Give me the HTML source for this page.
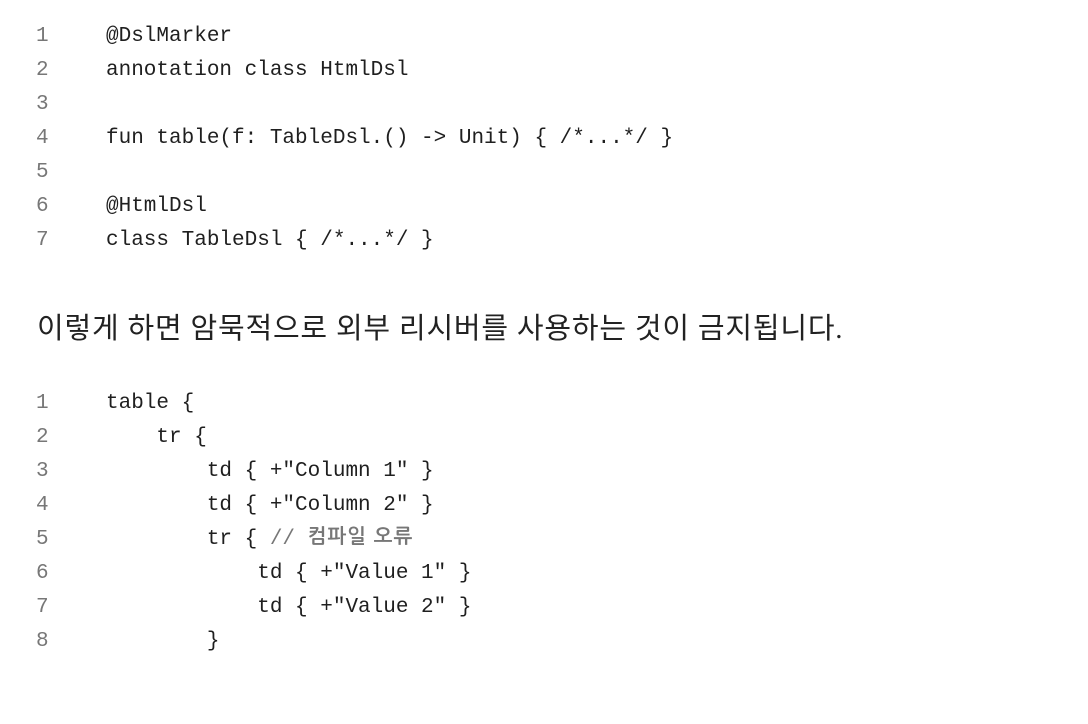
<!DOCTYPE html>
<html><head><meta charset="utf-8"><style>
body{margin:0;background:#fff;width:1088px;height:724px;overflow:hidden;position:relative}
.l{position:absolute;left:0;height:34px;line-height:34px;font-family:"Liberation Mono","NanumGothic",monospace;font-size:21px;color:#1f1f1f;white-space:pre}
.n{position:absolute;left:36px;color:#777}
.c{position:absolute;left:106px}
.cm{color:#777}
.ck{font-family:"NanumGothic","Noto Sans CJK KR",sans-serif;font-size:20px;font-weight:bold;letter-spacing:1px;line-height:20px;vertical-align:1px}
.p{position:absolute;left:37px;top:305px;font-family:"Liberation Serif","Noto Sans CJK KR",serif;font-size:29px;color:#222;white-space:nowrap;letter-spacing:0.8px}
</style></head><body>
<div class="l" style="top:20px"><span class="n">1</span><span class="c">@DslMarker</span></div>
<div class="l" style="top:54px"><span class="n">2</span><span class="c">annotation class HtmlDsl</span></div>
<div class="l" style="top:88px"><span class="n">3</span><span class="c"></span></div>
<div class="l" style="top:122px"><span class="n">4</span><span class="c">fun table(f: TableDsl.() -&gt; Unit) { /*...*/ }</span></div>
<div class="l" style="top:156px"><span class="n">5</span><span class="c"></span></div>
<div class="l" style="top:190px"><span class="n">6</span><span class="c">@HtmlDsl</span></div>
<div class="l" style="top:224px"><span class="n">7</span><span class="c">class TableDsl { /*...*/ }</span></div>
<div class="p">이렇게 하면 암묵적으로 외부 리시버를 사용하는 것이 금지됩니다.</div>
<div class="l" style="top:387px"><span class="n">1</span><span class="c">table {</span></div>
<div class="l" style="top:421px"><span class="n">2</span><span class="c">    tr {</span></div>
<div class="l" style="top:455px"><span class="n">3</span><span class="c">        td { +"Column 1" }</span></div>
<div class="l" style="top:489px"><span class="n">4</span><span class="c">        td { +"Column 2" }</span></div>
<div class="l" style="top:523px"><span class="n">5</span><span class="c">        tr { <span class="cm">// <span class="ck">컴파일 오류</span></span></span></div>
<div class="l" style="top:557px"><span class="n">6</span><span class="c">            td { +"Value 1" }</span></div>
<div class="l" style="top:591px"><span class="n">7</span><span class="c">            td { +"Value 2" }</span></div>
<div class="l" style="top:625px"><span class="n">8</span><span class="c">        }</span></div>
</body></html>
